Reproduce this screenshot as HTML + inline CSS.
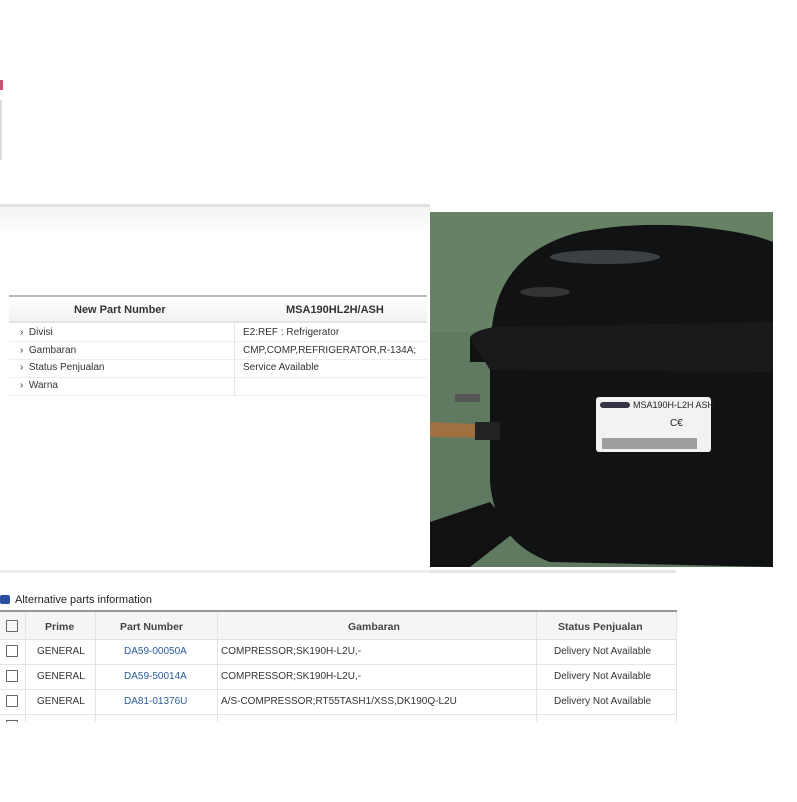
<!DOCTYPE html>
<html><head><meta charset="utf-8"><style>
body{margin:0;width:797px;height:797px;background:#fff;position:relative;overflow:hidden;font-family:"Liberation Sans",Arial,sans-serif;}
.a{position:absolute}
.t{font-size:10px;color:#333}
</style></head><body>
<div class="a" style="left:0;top:80px;width:3px;height:10px;background:#d05070"></div>
<div class="a" style="left:0;top:100px;width:2px;height:60px;background:#ddd"></div>
<div class="a" style="left:0;top:204px;width:430px;height:3px;background:#e2e2e2"></div>
<div class="a" style="left:0;top:207px;width:430px;height:30px;background:linear-gradient(#f4f4f4,#fff)"></div>
<div class="a" style="left:9px;top:295px;width:418px;height:2px;background:#bbb"></div>
<div class="a" style="left:9px;top:297px;width:418px;height:24px;background:linear-gradient(#fff,#f2f2f2);border-bottom:2px solid #e4e4e4"></div>
<div class="a" style="left:74px;top:304px;font-size:11px;font-weight:bold;color:#333">New Part Number</div>
<div class="a" style="left:286px;top:304px;font-size:11px;font-weight:bold;color:#333">MSA190HL2H/ASH</div>
<div class="a" style="left:234px;top:323px;width:1px;height:73px;background:#e4e4e4"></div>
<div class="a" style="left:9px;top:341px;width:418px;height:1px;background:#eee"></div>
<div class="a" style="left:9px;top:359px;width:418px;height:1px;background:#eee"></div>
<div class="a" style="left:9px;top:377px;width:418px;height:1px;background:#eee"></div>
<div class="a" style="left:9px;top:395px;width:418px;height:1px;background:#eee"></div>
<div class="a t" style="left:20px;top:327px">›&nbsp; Divisi</div>
<div class="a t" style="left:20px;top:345px">›&nbsp; Gambaran</div>
<div class="a t" style="left:20px;top:362px">›&nbsp; Status Penjualan</div>
<div class="a t" style="left:20px;top:380px">›&nbsp; Warna</div>
<div class="a t" style="left:243px;top:327px">E2:REF : Refrigerator</div>
<div class="a t" style="left:243px;top:345px">CMP,COMP,REFRIGERATOR,R-134A;</div>
<div class="a t" style="left:243px;top:362px">Service Available</div>
<svg class="a" style="left:430px;top:212px" width="343" height="355" viewBox="0 0 343 355">
<rect width="343" height="355" fill="#5f7a60"/>
<rect x="0" y="0" width="343" height="120" fill="#6a8568" opacity=".6"/>
<path d="M0 310 L60 290 L85 320 L40 355 L0 355Z" fill="#111"/>
<path d="M40 150 L40 125 Q55 120 62 115 Q70 40 150 20 Q200 10 260 14 Q320 20 343 30 L343 355 L120 350 Q65 330 60 270 L60 150Z" fill="#101214"/>
<path d="M40 125 Q45 118 65 115 L343 110 L343 160 L60 158Z" fill="#17191b"/>
<ellipse cx="175" cy="45" rx="55" ry="7" fill="#5a5e62" opacity=".6"/>
<ellipse cx="115" cy="80" rx="25" ry="5" fill="#555" opacity=".5"/>
<rect x="25" y="182" width="25" height="8" fill="#555"/>
<path d="M0 210 L70 213 L70 226 L0 225Z" fill="#a07040"/>
<rect x="45" y="210" width="25" height="18" fill="#222"/>
<rect x="166" y="185" width="115" height="55" rx="3" fill="#f2f2f2"/>
<rect x="170" y="190" width="30" height="6" rx="3" fill="#334"/>
<text x="203" y="196" font-size="9" font-family="Liberation Sans" fill="#222">MSA190H-L2H  ASH</text>
<text x="240" y="214" font-size="10" font-family="Liberation Sans" fill="#222">C€</text>
<rect x="172" y="226" width="95" height="11" fill="#666" opacity=".6"/>
</svg>
<div class="a" style="left:430px;top:570px;width:246px;height:3px;background:#e6e6e6"></div>
<div class="a" style="left:0;top:570px;width:430px;height:3px;background:#eee"></div>
<div class="a" style="left:0;top:595px;width:10px;height:9px;background:#2a4fa0;border-radius:2px"></div>
<div class="a" style="left:15px;top:594px;font-size:11px;color:#222">Alternative parts information</div>
<div class="a" style="left:0;top:610px;width:677px;height:2px;background:#999"></div>
<div class="a" style="left:0;top:612px;width:677px;height:27px;background:#f5f5f5;border-bottom:1px solid #e0e0e0"></div>
<div class="a" style="left:0;top:664px;width:677px;height:1px;background:#e4e4e4"></div>
<div class="a" style="left:0;top:689px;width:677px;height:1px;background:#e4e4e4"></div>
<div class="a" style="left:0;top:714px;width:677px;height:1px;background:#e4e4e4"></div>
<div class="a" style="left:25px;top:612px;width:1px;height:110px;background:#e4e4e4"></div>
<div class="a" style="left:95px;top:612px;width:1px;height:110px;background:#e4e4e4"></div>
<div class="a" style="left:217px;top:612px;width:1px;height:110px;background:#e4e4e4"></div>
<div class="a" style="left:536px;top:612px;width:1px;height:110px;background:#e4e4e4"></div>
<div class="a" style="left:676px;top:612px;width:1px;height:110px;background:#e4e4e4"></div>
<div class="a" style="left:6px;top:620px;width:10px;height:10px;border:1px solid #666;border-radius:1px"></div>
<div class="a" style="left:6px;top:645px;width:10px;height:10px;border:1px solid #666;border-radius:1px"></div>
<div class="a" style="left:6px;top:670px;width:10px;height:10px;border:1px solid #666;border-radius:1px"></div>
<div class="a" style="left:6px;top:695px;width:10px;height:10px;border:1px solid #666;border-radius:1px"></div>
<div class="a" style="left:6px;top:720px;width:10px;height:2px;border:1px solid #666;border-bottom:none"></div>
<div class="a" style="left:0;top:722px;width:680px;height:80px;background:#fff"></div>
<div class="a" style="left:45px;top:621px;font-size:10.5px;font-weight:bold;color:#444">Prime</div>
<div class="a" style="left:120px;top:621px;font-size:10.5px;font-weight:bold;color:#444">Part Number</div>
<div class="a" style="left:348px;top:621px;font-size:10.5px;font-weight:bold;color:#444">Gambaran</div>
<div class="a" style="left:558px;top:621px;font-size:10.5px;font-weight:bold;color:#444">Status Penjualan</div>
<div class="a t" style="left:37px;top:646px">GENERAL</div>
<div class="a t" style="left:37px;top:671px">GENERAL</div>
<div class="a t" style="left:37px;top:696px">GENERAL</div>
<div class="a t" style="left:124px;top:646px;color:#2a5a9a">DA59-00050A</div>
<div class="a t" style="left:124px;top:671px;color:#2a5a9a">DA59-50014A</div>
<div class="a t" style="left:124px;top:696px;color:#2a5a9a">DA81-01376U</div>
<div class="a t" style="left:221px;top:646px">COMPRESSOR;SK190H-L2U,-</div>
<div class="a t" style="left:221px;top:671px">COMPRESSOR;SK190H-L2U,-</div>
<div class="a t" style="left:221px;top:696px">A/S-COMPRESSOR;RT55TASH1/XSS,DK190Q-L2U</div>
<div class="a t" style="left:554px;top:646px">Delivery Not Available</div>
<div class="a t" style="left:554px;top:671px">Delivery Not Available</div>
<div class="a t" style="left:554px;top:696px">Delivery Not Available</div>
</body></html>
